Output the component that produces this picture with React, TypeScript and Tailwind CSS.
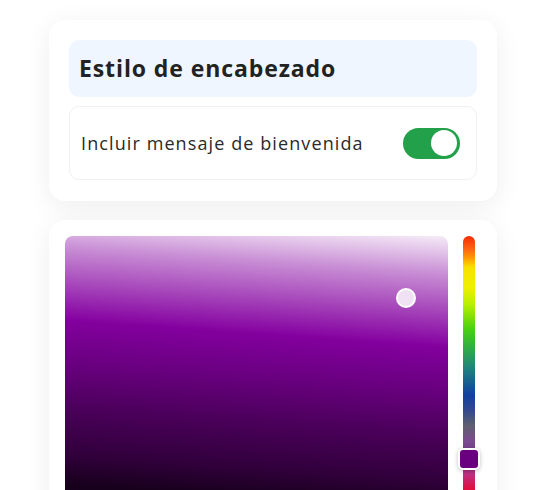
export default function App() {
  return (
    <div className="w-[546px] h-[490px] overflow-hidden bg-white font-['Open_Sans','Noto_Sans',sans-serif]">
      <div className="pt-[20px] pl-[49px] w-[497px] flex flex-col gap-[19px]">
        <div className="w-[448px] rounded-[16px] bg-white shadow-[0_6px_28px_rgba(0,0,0,0.07)] px-[20px] pt-[20px] pb-[21px] flex flex-col gap-[9px]">
          <div className="h-[57px] rounded-[10px] bg-[#eff6ff] px-[10px] flex items-center">
            <h2 className="text-[23px] font-bold text-[#222222] tracking-[0.9px]">Estilo de encabezado</h2>
          </div>
          <div className="h-[74px] rounded-[10px] border border-[#f0f0f0] pl-[11px] pr-[16px] flex items-center justify-between">
            <span className="text-[18px] text-[#2a2a2a] tracking-[1.1px]">Incluir mensaje de bienvenida</span>
            <div className="w-[57px] h-[31px] rounded-full bg-[#22a04a] relative">
              <div className="absolute right-[3px] top-[2.5px] w-[26px] h-[26px] rounded-full bg-white"></div>
            </div>
          </div>
        </div>
        <div className="w-[448px] h-[320px] rounded-[16px] bg-white shadow-[0_6px_28px_rgba(0,0,0,0.07)] pt-[16px] pl-[16px] flex gap-[10px]">
          <div className="relative w-[383px] h-[300px] rounded-[8px] bg-[#8400a0] bg-[linear-gradient(184deg,rgba(255,255,255,0.92)_0%,rgba(255,255,255,0.55)_12%,rgba(255,255,255,0)_34%),linear-gradient(184deg,rgba(0,0,0,0)_33%,rgba(0,0,0,0.22)_48%,rgba(0,0,0,0.44)_61%,rgba(0,0,0,0.63)_75%,rgba(0,0,0,0.82)_84%,rgba(0,0,0,0.95)_100%)]">
            <div className="absolute left-[331px] top-[52px] w-[20px] h-[20px] rounded-full border-2 border-white bg-[#f0e0f4]"></div>
          </div>
          <div className="relative w-[22px] h-[300px] flex justify-center">
            <div className="w-[12px] h-[284px] rounded-full bg-[linear-gradient(to_bottom,#f42a08_0%,#ff6a10_5%,#ffa000_8%,#f8e000_11%,#f0f000_18%,#b8f000_24%,#48d010_33%,#30b040_39%,#208080_47%,#1040a0_56%,#304890_61%,#606070_67%,#7a4a90_72%,#7a3a8a_78%,#c03080_84%,#e01040_89%,#ff0030_100%)]"></div>
            <div className="absolute left-0 top-[212px] w-[22px] h-[22px] rounded-[5px] border-2 border-white bg-[#6a0080] shadow-[0_1px_4px_rgba(0,0,0,0.25)]"></div>
          </div>
        </div>
      </div>
    </div>
  );
}
